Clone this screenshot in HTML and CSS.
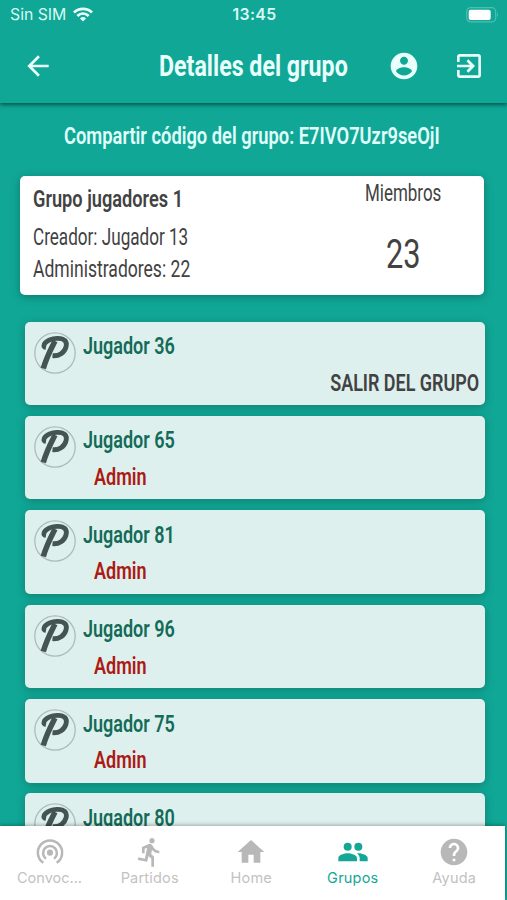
FILE: index.html
```html
<!DOCTYPE html>
<html lang="es">
<head>
    <meta charset="UTF-8">
    <meta name="viewport" content="width=device-width, initial-scale=1.0">
    <title>Detalles del grupo</title>
    <link rel="stylesheet" href="styles.css">
</head>
<body>
    <svg width="0" height="0" class="defs">
        <symbol id="logo" viewBox="0 0 42 42">
            <circle cx="21" cy="21" r="20.2" fill="none" stroke="#acbcba" stroke-width="1.3"/>
            <g fill="none" stroke="#435452" stroke-linejoin="round">
                <path d="M21 9C17.500 16 12.500 25 9.300 36.500" stroke-width="5.500"/>
                <path d="M12 15.500C6.500 14.500 12 6.800 23 6.300C30.500 6 33.500 9.500 32 15C30.500 20.500 25 24.300 18.500 23.700" stroke-width="4.800"/>
            </g>
        </symbol>
    </svg>

    <div class="status-bar">
        <div class="carrier">
            <span>Sin SIM</span>
            <svg width="20" height="15" viewBox="0 0 20 15" fill="none" stroke="#e9fffb" stroke-width="2.700">
                <path d="M1 5.500C6 .6 14 .6 19 5.500"/>
                <path d="M4.300 9C7.700 5.800 12.300 5.800 15.700 9"/>
                <path d="M7 11.400Q10 8.800 13 11.400L10 14.600Z" fill="#e9fffb" stroke="none"/>
            </svg>
        </div>
        <span class="time">13:45</span>
        <svg class="battery" width="33" height="16" viewBox="0 0 33 16">
            <rect x=".7" y=".7" width="29" height="14.200" rx="4" fill="none" stroke="#4fbfb2" stroke-width="1.200"/>
            <rect x="2.700" y="2.700" width="22" height="10.300" rx="2" fill="#fff"/>
            <path d="M31 5.500Q33 7.800 31 10.100Z" fill="#4fbfb2"/>
        </svg>
    </div>

    <header class="toolbar">
        <svg class="back" width="32" height="32" viewBox="0 0 24 24" fill="#e9fffb"><path d="M20 11H7.830l5.590-5.590L12 4l-8 8 8 8 1.410-1.410L7.830 13H20v-2z"/></svg>
        <h1 class="narrow">Detalles del grupo</h1>
        <svg class="account" width="32" height="32" viewBox="0 0 24 24" fill="#e9fffb"><path d="M12 2C6.480 2 2 6.480 2 12s4.480 10 10 10 10-4.480 10-10S17.520 2 12 2zm0 3c1.660 0 3 1.340 3 3s-1.340 3-3 3-3-1.340-3-3 1.340-3 3-3zm0 14.200c-2.500 0-4.710-1.280-6-3.220.03-1.990 4-3.080 6-3.080 1.990 0 5.970 1.090 6 3.080-1.290 1.940-3.500 3.220-6 3.220z"/></svg>
        <svg class="exit" width="32" height="32" viewBox="0 0 24 24" fill="#e9fffb"><path d="M10.090 15.590L11.500 17l5-5-5-5-1.410 1.410L12.670 11H3v2h9.670l-2.580 2.590zM19 3H5c-1.110 0-2 .9-2 2v4h2V5h14v14H5v-4H3v4c0 1.100.89 2 2 2h14c1.100 0 2-.9 2-2V5c0-1.100-.9-2-2-2z"/></svg>
    </header>

    <main class="content">
        <p class="share narrow">Compartir código del grupo: E7IVO7Uzr9seOjI</p>

        <section class="group-card">
            <div class="group-info">
                <h2 class="narrow">Grupo jugadores 1</h2>
                <p class="creator narrow">Creador: Jugador 13</p>
                <p class="admins narrow">Administradores: 22</p>
            </div>
            <div class="group-members">
                <p class="members-label narrow">Miembros</p>
                <p class="members-count narrow">23</p>
            </div>
        </section>

        <ul class="members">
            <li class="member">
                <svg class="avatar"><use href="#logo"/></svg>
                <div class="member-info">
                    <span class="name narrow">Jugador 36</span>
                </div>
                <a class="leave narrow">SALIR DEL GRUPO</a>
            </li>
            <li class="member">
                <svg class="avatar"><use href="#logo"/></svg>
                <div class="member-info">
                    <span class="name narrow">Jugador 65</span>
                    <span class="role narrow">Admin</span>
                </div>
            </li>
            <li class="member">
                <svg class="avatar"><use href="#logo"/></svg>
                <div class="member-info">
                    <span class="name narrow">Jugador 81</span>
                    <span class="role narrow">Admin</span>
                </div>
            </li>
            <li class="member">
                <svg class="avatar"><use href="#logo"/></svg>
                <div class="member-info">
                    <span class="name narrow">Jugador 96</span>
                    <span class="role narrow">Admin</span>
                </div>
            </li>
            <li class="member">
                <svg class="avatar"><use href="#logo"/></svg>
                <div class="member-info">
                    <span class="name narrow">Jugador 75</span>
                    <span class="role narrow">Admin</span>
                </div>
            </li>
            <li class="member">
                <svg class="avatar"><use href="#logo"/></svg>
                <div class="member-info">
                    <span class="name narrow">Jugador 80</span>
                </div>
            </li>
        </ul>
    </main>

    <nav class="tabs">
        <a class="tab">
            <svg viewBox="0 0 24 24" fill="none" stroke="currentColor" stroke-width="1.900"><circle cx="12" cy="12.500" r="2.300" fill="currentColor" stroke="none"/><path d="M7 20.100A9.100 9.100 0 1 1 17 20.100M9 17A5.200 5.200 0 1 1 15 17"/></svg>
            <span>Convoc...</span>
        </a>
        <a class="tab">
            <svg viewBox="0 0 24 24" fill="currentColor"><path d="M13.490 5.480c1.100 0 2-.9 2-2s-.9-2-2-2-2 .9-2 2 .9 2 2 2zm-3.600 13.900l1-4.400 2.100 2v6h2v-7.500l-2.100-2 .6-3c1.300 1.500 3.300 2.500 5.500 2.500v-2c-1.900 0-3.500-1-4.300-2.400l-1-1.600c-.4-.6-1-1-1.700-1-.3 0-.5.1-.8.1l-5.200 2.200v4.700h2v-3.400l1.800-.7-1.600 8.100-4.900-1-.4 2 7 1.400z"/></svg>
            <span>Partidos</span>
        </a>
        <a class="tab">
            <svg viewBox="0 0 24 24" fill="currentColor"><path d="M10 20v-6h4v6h5v-8h3L12 3 2 12h3v8z"/></svg>
            <span>Home</span>
        </a>
        <a class="tab active">
            <svg viewBox="0 0 24 24" fill="currentColor"><circle cx="8" cy="8" r="3"/><circle cx="16" cy="8" r="3"/><path d="M8 13c-2.330 0-7 1.170-7 3.500V19h14v-2.500c0-2.330-4.670-3.500-7-3.500zM16 13c-.29 0-.62.02-.97.05 1.160.84 1.970 1.970 1.970 3.450V19h6v-2.500c0-2.330-4.670-3.500-7-3.500z"/></svg>
            <span>Grupos</span>
        </a>
        <a class="tab">
            <svg viewBox="0 0 24 24" fill="currentColor"><path d="M12 2C6.480 2 2 6.480 2 12s4.480 10 10 10 10-4.480 10-10S17.520 2 12 2zm1 17h-2v-2h2v2zm2.070-7.750l-.9.920C13.450 12.900 13 13.500 13 15h-2v-.5c0-1.100.45-2.100 1.170-2.830l1.240-1.260c.37-.36.59-.86.59-1.410 0-1.100-.9-2-2-2s-2 .9-2 2H8c0-2.210 1.790-4 4-4s4 1.790 4 4c0 .88-.36 1.680-.93 2.250z"/></svg>
            <span>Ayuda</span>
        </a>
    </nav>
</body>
</html>
```
FILE: styles.css
```css
* {
    box-sizing: border-box;
}
body {
    display: flex;
    flex-direction: column;
    height: 900px;
    margin: 0;
    overflow: hidden;
    font-family: Roboto, sans-serif;
    color: #424242;
    background-color: #10a797;
}
h1, h2, p, ul {
    margin: 0;
    padding: 0;
}
.defs {
    position: absolute;
}

/* tall condensed lettering */
.narrow {
    width: max-content;
    font-size: 24px;
    line-height: 32px;
    white-space: nowrap;
    transform: scaleX(var(--fit));
    transform-origin: left center;
}

.status-bar {
    display: grid;
    grid-template-columns: 1fr auto 1fr;
    align-items: center;
    height: 29px;
    flex: none;
    z-index: 2;
    padding: 0 8px 0 10px;
    color: #d9f8f3;
    background-color: #10a797;
    font: 15.800px/29px Inter, sans-serif;
}
.carrier {
    display: flex;
    align-items: center;
    gap: 7px;
}
.time {
    font-weight: 600;
    letter-spacing: 0.4px;
}
.battery {
    justify-self: end;
}

.toolbar {
    display: flex;
    align-items: center;
    flex: none;
    height: 74px;
    padding: 0 22px;
    z-index: 1;
    box-shadow: 0 2px 4px rgba(0, 60, 50, 0.75);
    background-color: #10a797;
}
.toolbar h1 {
    --fit: 0.8;
    width: 229px;
    margin-left: 105px;
    font-size: 29px;
    font-weight: 700;
    color: #e9fffb;
}
.exit {
    margin-left: 33px;
}

.content {
    flex: 1;
    min-height: 0;
    padding: 17px 22px 0 20px;
    overflow: hidden;
}
.share {
    --fit: 0.763;
    margin-left: 44px;
    font-weight: 600;
    color: #e0fffa;
}
.group-card {
    display: flex;
    justify-content: space-between;
    height: 119px;
    margin: 24px 1px 0 0;
    padding: 0 13px;
    border-radius: 5px;
    background-color: #fff;
    box-shadow: 0 2px 8px rgba(0, 70, 60, 0.45);
}
.group-info {
    padding-top: 7px;
}
.group-info h2 {
    --fit: 0.758;
    font-weight: 600;
}
.creator {
    --fit: 0.713;
    margin-top: 6px;
}
.admins {
    --fit: 0.731;
}
.group-members {
    width: 106px;
}
.members-label {
    --fit: 0.707;
    padding-top: 1px;
}
.members-count {
    --fit: 0.75;
    margin: 19px 0 0 21px;
    font-size: 41px;
    line-height: 52px;
}

.members {
    display: flex;
    flex-direction: column;
    gap: 10.800px;
    margin: 26.500px 0 0 5px;
    list-style: none;
}
.member {
    display: flex;
    flex: none;
    height: 83.600px;
    padding: 10px 6px 0 9px;
    border-radius: 5px;
    background-color: #def0ee;
    box-shadow: 0 2px 8px rgba(20, 70, 50, 0.4);
}
.avatar {
    flex: none;
    width: 42px;
    height: 42px;
}
.member-info {
    display: flex;
    flex-direction: column;
    margin-left: 7px;
}
.name {
    --fit: 0.75;
    margin-top: -1.500px;
    font-weight: 600;
    color: #136b58;
}
.role {
    --fit: 0.75;
    margin: 4.500px 0 0 11px;
    font-weight: 600;
    color: #ab1a13;
}
.leave {
    --fit: 0.748;
    margin: 35px 0 0 auto;
    font-weight: 600;
    transform-origin: right center;
}

.tabs {
    display: grid;
    grid-template-columns: 99px repeat(4, 101.500px);
    flex: none;
    width: 505px;
    height: 74px;
    z-index: 1;
    background-color: #fff;
    box-shadow: 0 -1px 4px rgba(0, 0, 0, 0.3);
}
.tab {
    display: flex;
    flex-direction: column;
    align-items: center;
    padding-top: 10px;
    color: #b8b8b8;
    font: 14.500px/20px Inter, sans-serif;
    letter-spacing: 0.2px;
}
.tab:first-child {
    letter-spacing: 0;
}
.tab svg {
    width: 32px;
    height: 32px;
}
.tab span {
    color: #c2c2c2;
}
.tab.active,
.tab.active span {
    color: #14a795;
}
```
